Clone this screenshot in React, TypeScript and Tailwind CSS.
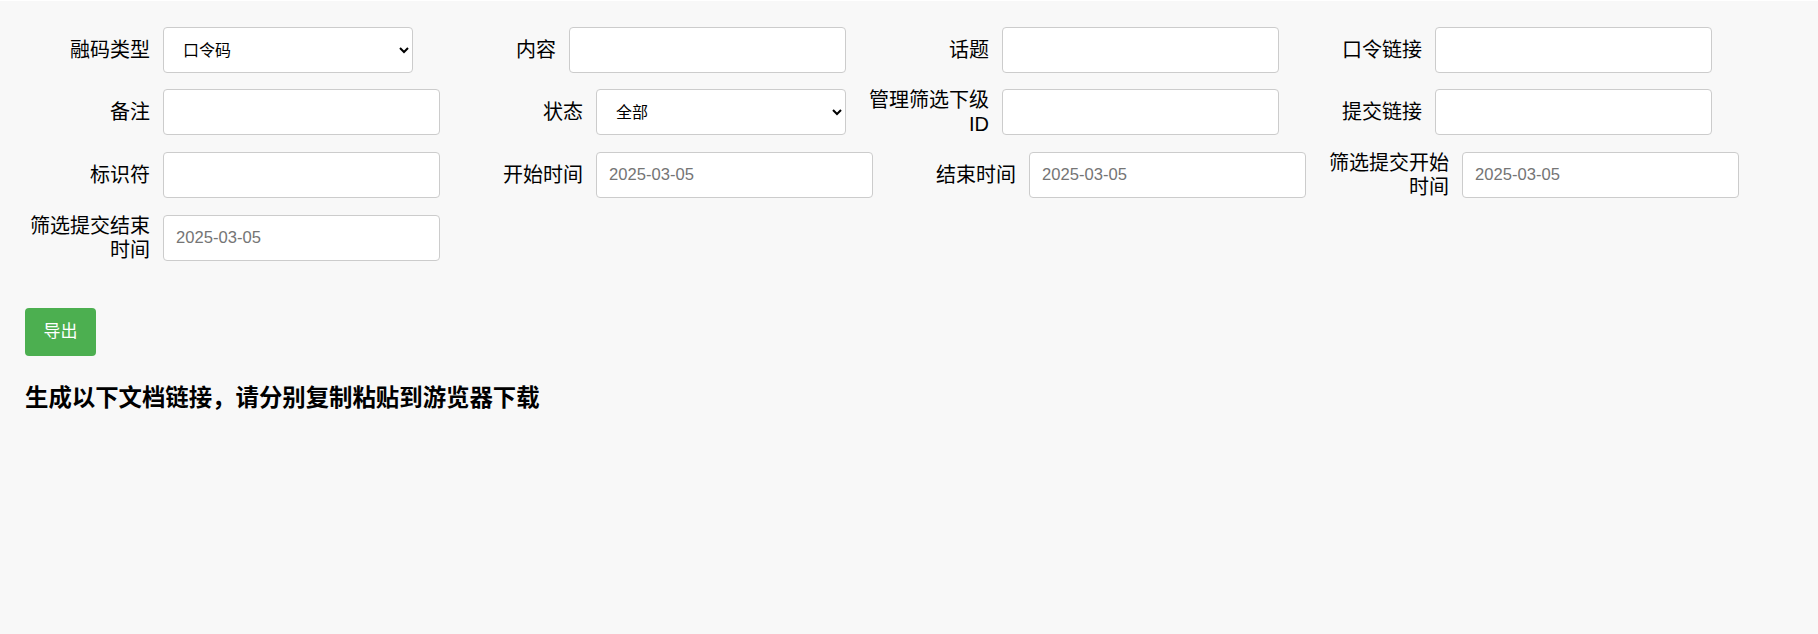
import React from "react"

type Field = {
  label: string
  kind: "text" | "select" | "date"
  options?: string[]
}

// 筛选字段
const fields: Field[] = [
  { label: "融码类型", kind: "select", options: ["口令码", "链接码"] },
  { label: "内容", kind: "text" },
  { label: "话题", kind: "text" },
  { label: "口令链接", kind: "text" },
  { label: "备注", kind: "text" },
  { label: "状态", kind: "select", options: ["全部", "已提交", "未提交"] },
  { label: "管理筛选下级ID", kind: "text" },
  { label: "提交链接", kind: "text" },
  { label: "标识符", kind: "text" },
  { label: "开始时间", kind: "date" },
  { label: "结束时间", kind: "date" },
  { label: "筛选提交开始时间", kind: "date" },
  { label: "筛选提交结束时间", kind: "date" },
]

const font = { fontFamily: '"Liberation Sans", "Noto Sans CJK SC", sans-serif' }

export default function App() {
  return (
    <div className="min-h-[634px] border-t border-white bg-[#f8f8f8] px-[25px] pt-[26px] text-black" style={font}>
      <div className="flex flex-wrap">
        {fields.map(f => (
          <div key={f.label} className="flex items-center mr-[18px] mb-[15px]">
            <label className="w-[125px] shrink-0 text-right text-[20px] leading-[24px]">{f.label}</label>
            {f.kind === "select" ? (
              <select className="ml-[13px] h-[46px] w-[250px] rounded-[4px] border border-[#cccccc] bg-white pl-[15px] pr-[4px] text-[16px] text-black outline-none">
                {f.options!.map(o => <option key={o}>{o}</option>)}
              </select>
            ) : (
              <input
                type="text"
                placeholder={f.kind === "date" ? "2025-03-05" : ""}
                className="ml-[13px] h-[46px] w-[277px] rounded-[4px] border border-[#cccccc] bg-white px-[12px] text-[16.6px] outline-none placeholder:text-[#757575]"
              />
            )}
          </div>
        ))}
      </div>

      <button className="mt-[31px] flex h-[48px] w-[71px] items-center justify-center rounded-[4px] bg-[#4caf50] text-[17px] text-white">
        导出
      </button>

      <h3 className="mt-[28px] text-[23.4px] font-bold leading-[28px]">生成以下文档链接，请分别复制粘贴到游览器下载</h3>
    </div>
  )
}
